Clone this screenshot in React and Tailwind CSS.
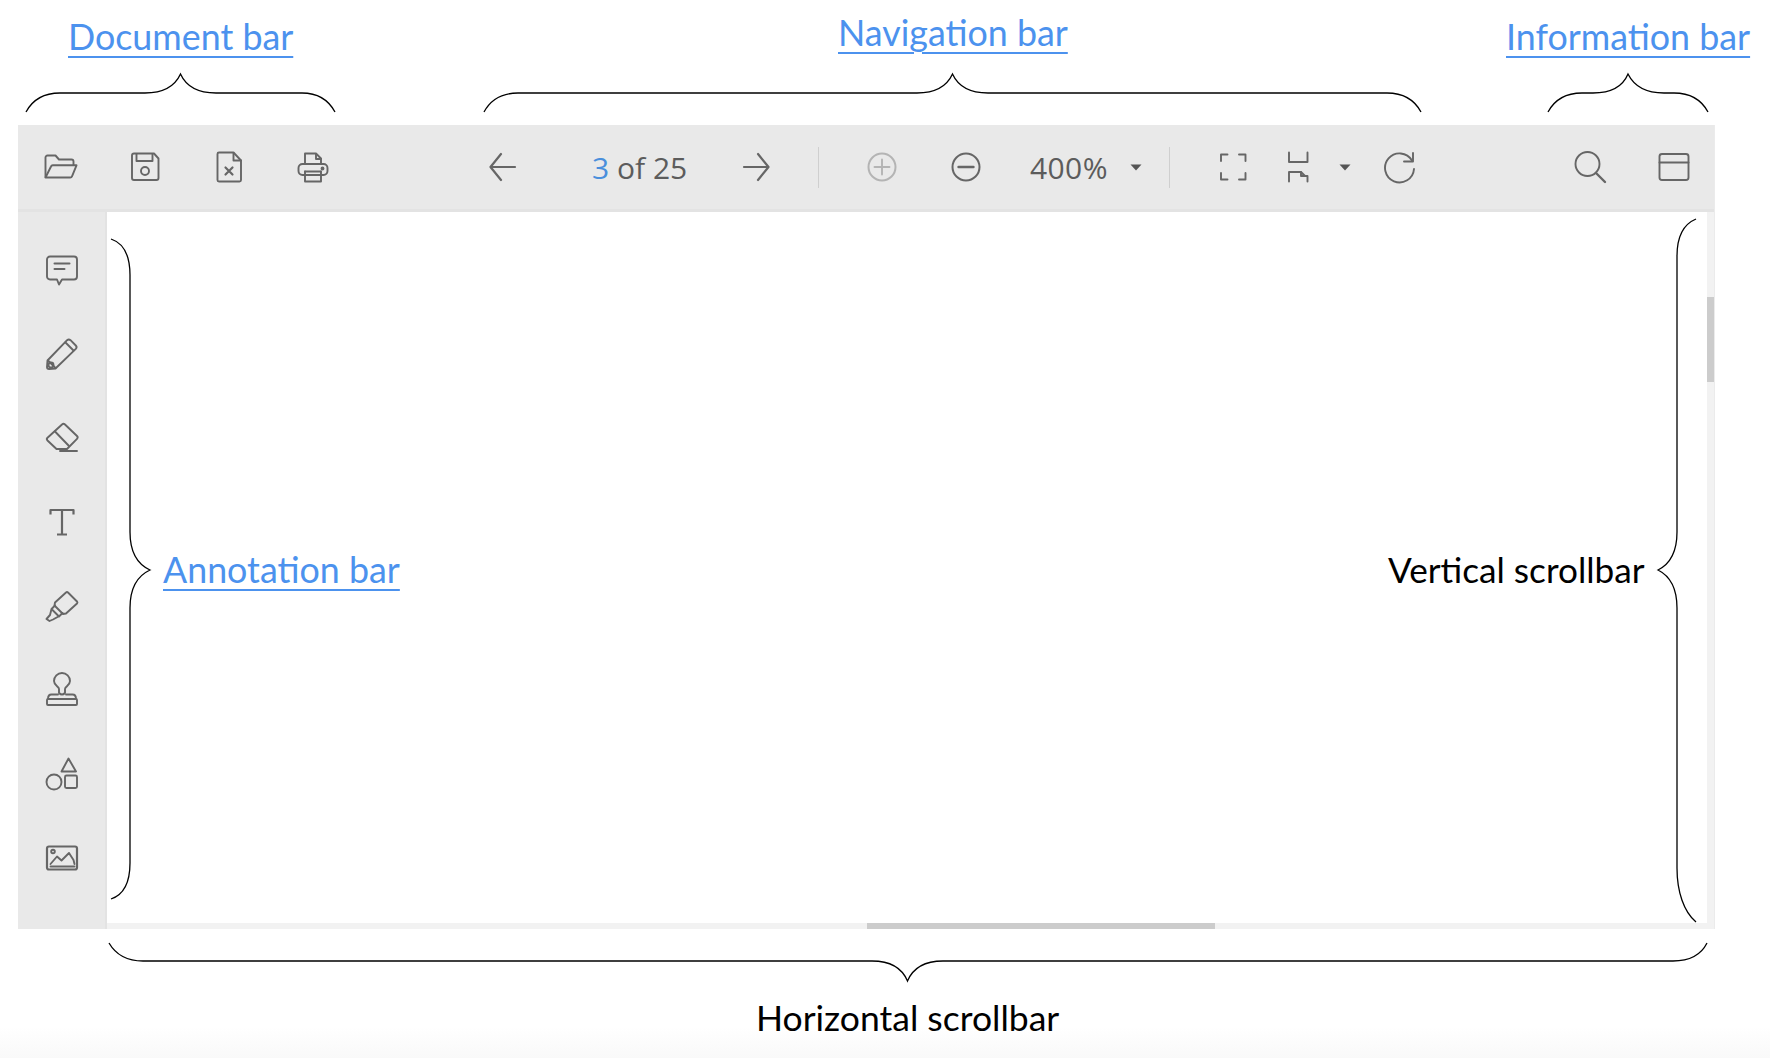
const Icon = ({ children, size = 36 }) => (
  <svg
    width={size}
    height={size}
    viewBox="0 0 36 36"
    fill="none"
    stroke="#666666"
    strokeWidth="1.900"
    strokeLinecap="round"
    strokeLinejoin="round"
  >
    {children}
  </svg>
);

const FolderIcon = () => (
  <Icon>
    <path d="M2.500 28V8.500a2 2 0 0 1 2-2h8l3.500 4h12.500a2 2 0 0 1 2 2V16" />
    <path d="M2.500 28.500 8 17.500a2 2 0 0 1 2-1.200h23.500L29 27.300a2 2 0 0 1-2 1.200H4z" />
  </Icon>
);
const SaveIcon = () => (
  <Icon>
    <path d="M7 4.500h20l4.500 5v19.500a2 2 0 0 1-2 2H7a2 2 0 0 1-2-2V6.500a2 2 0 0 1 2-2z" />
    <path d="M9.500 5v7h16V5" />
    <circle cx="18" cy="22" r="4" />
  </Icon>
);
const FileXIcon = () => (
  <Icon>
    <path d="M8 3.500h14.500l7.500 8V31a1.500 1.500 0 0 1-1.500 1.500H8A1.500 1.500 0 0 1 6.500 31V5A1.500 1.500 0 0 1 8 3.500z" />
    <path d="M22.500 4v7.500H30" />
    <path d="M14.500 18.500l7 7M21.500 18.500l-7 7" strokeWidth="2.200" />
  </Icon>
);
const PrinterIcon = () => (
  <Icon>
    <path d="M10 15V4.500h11l5 5V15" />
    <path d="M21 5v5h5" />
    <rect x="3.500" y="15" width="29" height="11" rx="4" />
    <path d="M10 22.500v10h16v-10" />
    <path d="M10 22.500h16" />
    <circle cx="27.500" cy="19.500" r="1" fill="#666666" />
  </Icon>
);
const ArrowLeft = () => (
  <Icon>
    <path d="M30 18H6M16 5 5.500 18 16 31" strokeWidth="2.200" />
  </Icon>
);
const ArrowRight = () => (
  <Icon>
    <path d="M6 18h24M20 5l10.500 13L20 31" strokeWidth="2.200" />
  </Icon>
);
const PlusCircle = () => (
  <Icon>
    <g stroke="#b4b4b4">
      <circle cx="18" cy="18" r="13.500" strokeWidth="2" />
      <path d="M18 10.500v15M10.500 18h15" />
    </g>
  </Icon>
);
const MinusCircle = () => (
  <Icon>
    <circle cx="18" cy="18" r="13.500" strokeWidth="2" />
    <path d="M10.500 18h15" strokeWidth="2.400" />
  </Icon>
);
const Fullscreen = () => (
  <Icon>
    <path d="M6 12V5.500h6.500M24 5.500h6.500V12M30.500 24v6.500H24M12.500 30.500H6V24" />
  </Icon>
);
const FitPage = () => (
  <Icon>
    <path d="M9 3.500V13h18.500V3.500" />
    <path d="M9 32.500V23h12l4 4h2.500v5.500" />
    <path d="M21 23v4h4" />
  </Icon>
);
const RotateIcon = () => (
  <Icon>
    <path d="M30 11.500A14.500 14.500 0 1 0 32 20" />
    <path d="M31 4v8.500h-9" />
  </Icon>
);
const SearchIcon = () => (
  <Icon>
    <circle cx="15.500" cy="15" r="12" />
    <path d="M24 24l9 9" strokeWidth="2.400" />
  </Icon>
);
const PanelIcon = () => (
  <Icon>
    <rect x="3.500" y="5" width="29" height="26" rx="2.500" />
    <path d="M3.500 13.500h29" />
  </Icon>
);
const Caret = () => (
  <svg width="12" height="7" viewBox="0 0 12 7">
    <path d="M0.500 0.500h11L6 6.500z" fill="#555555" />
  </svg>
);

const CommentIcon = () => (
  <Icon>
    <path d="M6 4.500h24a3 3 0 0 1 3 3v17a3 3 0 0 1-3 3H18l-3 5-2-5H6a3 3 0 0 1-3-3v-17a3 3 0 0 1 3-3z" />
    <path d="M10.500 11.500h15M10.500 17h10" strokeWidth="2" />
  </Icon>
);
const PencilIcon = () => (
  <Icon>
    <path d="M26.500 4.200 31.800 9.500a2.500 2.500 0 0 1 0 3.400L11.500 32.500 5 33a2 2 0 0 1-2-2l.5-6.500L23.100 4.200a2.500 2.500 0 0 1 3.400 0z" />
    <path d="M21.500 6.500l8 8M4 24.500l7.500 7.500" />
    <circle cx="7" cy="29" r="2.500" />
  </Icon>
);
const EraserIcon = () => (
  <Icon>
    <path d="M21 4.500 33 16a2 2 0 0 1 0 2.800L23 29H12.500L3.500 20.500a2 2 0 0 1 0-2.800L18 4.500a2.200 2.200 0 0 1 3 0z" />
    <path d="M11 11.500 25 26M16 31h17" />
  </Icon>
);
const TextIcon = () => (
  <Icon>
    <path d="M6.500 10.500V6h23v4.500M18 6v24M13 30.500h10" strokeWidth="2.200" strokeLinecap="butt" />
  </Icon>
);
const HighlighterIcon = () => (
  <Icon>
    <path d="M24 4.500 33 13.500a1.500 1.500 0 0 1 0 2L22 25.500l-3 .5-8.500-8.500.5-3L22 4.500a1.500 1.500 0 0 1 2 0z" />
    <path d="M11 17.500 7.500 21l7.500 7.500 3.500-3.500M7.500 21 6 27l-3.500 4 3 2 3.500-1.500 5.500-3" />
  </Icon>
);
const StampIcon = () => (
  <Icon>
    <path d="M15 21V17C15 14.500 10 13.500 10 9a8 8 0 0 1 16 0C26 13.500 21 14.500 21 17V21q-3 3-6 0z" />
    <path d="M4 27c0-3 1-4.500 3.500-4.500H14M22 22.500h6.500C31 22.500 32 24 32 27" />
    <rect x="3" y="27" width="30" height="6" rx="1" />
  </Icon>
);
const ShapesIcon = () => (
  <Icon>
    <path d="M24.500 2.500 32 15.500H17.500z" />
    <circle cx="10" cy="26" r="7.500" />
    <rect x="21" y="19.500" width="12" height="12.500" rx="1.500" />
  </Icon>
);
const ImageIcon = () => (
  <Icon>
    <rect x="3" y="6.500" width="30" height="23" rx="2" strokeWidth="2.200" />
    <circle cx="9" cy="11.500" r="1.800" />
    <path d="M6.500 24 13 16.500l4.500 4 7.500-7.500 4.500 7 1 4" />
    <path d="M6.500 26.500h24" />
  </Icon>
);

const Label = ({ className, children }) => (
  <a
    href="#"
    className={`absolute whitespace-nowrap text-[35.800px] text-[#4c92ee] underline decoration-2 underline-offset-[6px] ${className}`}
  >
    {children}
  </a>
);

const Note = ({ className, children }) => (
  <span className={`absolute whitespace-nowrap text-black ${className}`}>{children}</span>
);

const docTools = [FolderIcon, SaveIcon, FileXIcon, PrinterIcon];
const sideTools = [
  CommentIcon,
  PencilIcon,
  EraserIcon,
  TextIcon,
  HighlighterIcon,
  StampIcon,
  ShapesIcon,
  ImageIcon,
];

export default function App() {
  return (
    <div className="relative h-[1058px] w-[1770px] overflow-hidden bg-linear-to-b from-white from-[97%] to-[#f9f9f9] pl-[18px] pt-[125px] font-['Lato',sans-serif]">
      <div className="flex h-[804px] w-[1697px] flex-col border-r border-[#ebebeb]">
        <div className="flex h-[87px] shrink-0 items-center border-b-[3px] border-[#e3e3e3] bg-[#e9e9e9] pl-px font-['Open_Sans',sans-serif] text-[30px] text-[#5c5c5c]">
          {docTools.map((Tool, i) => (
            <div key={i} className="flex w-[84px] justify-center">
              <Tool />
            </div>
          ))}
          <div className="ml-[106px] flex w-[84px] justify-center">
            <ArrowLeft />
          </div>
          <div className="w-[169px] pl-[47px]">
            <span className="text-[#4a8fdc]">3</span> of 25
          </div>
          <div className="flex w-[84px] justify-center">
            <ArrowRight />
          </div>
          <div className="ml-[20px] h-[41px] w-px bg-[#cfcfcf]" />
          <div className="ml-[21px] flex w-[84px] justify-center">
            <PlusCircle />
          </div>
          <div className="flex w-[84px] justify-center">
            <MinusCircle />
          </div>
          <div className="ml-[22px] w-[100px] tracking-[0.4px]">400%</div>
          <Caret />
          <div className="ml-[27px] h-[41px] w-px bg-[#cfcfcf]" />
          <div className="ml-[21px] flex w-[84px] justify-center">
            <Fullscreen />
          </div>
          <div className="ml-[3px] flex w-[40px] justify-center">
            <FitPage />
          </div>
          <div className="ml-[21px]">
            <Caret />
          </div>
          <div className="ml-[31px] flex w-[36px] justify-center">
            <RotateIcon />
          </div>
          <div className="ml-auto mr-[2px] flex w-[84px] justify-center">
            <SearchIcon />
          </div>
          <div className="flex w-[80px] justify-center">
            <PanelIcon />
          </div>
        </div>

        <div className="flex min-h-0 flex-1">
          <div className="flex w-[89px] shrink-0 flex-col items-center border-r-2 border-[#e3e3e3] bg-[#e9e9e9] pt-[16px]">
            {sideTools.map((Tool, i) => (
              <div key={i} className="flex h-[84px] w-full items-center justify-center">
                <Tool />
              </div>
            ))}
          </div>
          <div className="flex min-w-0 flex-1 flex-col">
            <div className="flex min-h-0 flex-1">
              <div className="flex-1 bg-white" />
              <div className="w-[7px] bg-[#f2f2f2] pt-[85px]">
                <div className="h-[85px] bg-[#cccccc]" />
              </div>
            </div>
            <div className="h-[6px] shrink-0 bg-[#f2f2f2] pl-[760px]">
              <div className="h-full w-[348px] bg-[#cccccc]" />
            </div>
          </div>
        </div>
      </div>

      <svg
        className="pointer-events-none absolute left-0 top-0"
        width="1770"
        height="1058"
        viewBox="0 0 1770 1058"
        fill="none"
        stroke="#000000"
        strokeWidth="1.300"
      >
        <path d="M26 112C33 99 45 93 60 93H145C163 93 175 86 180.500 74C186 86 198 93 216 93H302C317 93 328 99 335 112" />
        <path d="M484 112C491 99 503 93 518 93H917C935 93 947 86 952.500 74C958 86 970 93 988 93H1387C1402 93 1414 99 1421 112" />
        <path d="M1548 112C1555 99 1567 93 1582 93H1593C1611 93 1623 86 1628 74C1634 86 1646 93 1664 93H1674C1689 93 1701 99 1708 112" />
        <path d="M111 239C123 243 130 255 130 275V532C130 552 137 564 150 570C137 576 130 588 130 608V863C130 883 123 895 111 899" />
        <path d="M1696 219C1684 224 1677 236 1677 256V532C1677 552 1670 564 1658 570C1670 576 1677 588 1677 608V868C1677 892 1684 912 1696 922" />
        <path d="M109 943C116 955 128 961 143 961H872C890 961 902 968 907.500 981C913 968 925 961 943 961H1673C1690 961 1701 955 1707 943" />
      </svg>

      <Label className="left-[68px] top-[10px]">Document bar</Label>
      <Label className="left-[838px] top-[6px]">Navigation bar</Label>
      <Label className="left-[1506px] top-[10px]">Information bar</Label>
      <Label className="left-[163px] top-[543px]">Annotation bar</Label>
      <Note className="left-[1388px] top-[543px] text-[35.200px]">Vertical scrollbar</Note>
      <Note className="left-[756px] top-[991px] text-[35.500px]">Horizontal scrollbar</Note>
    </div>
  );
}
